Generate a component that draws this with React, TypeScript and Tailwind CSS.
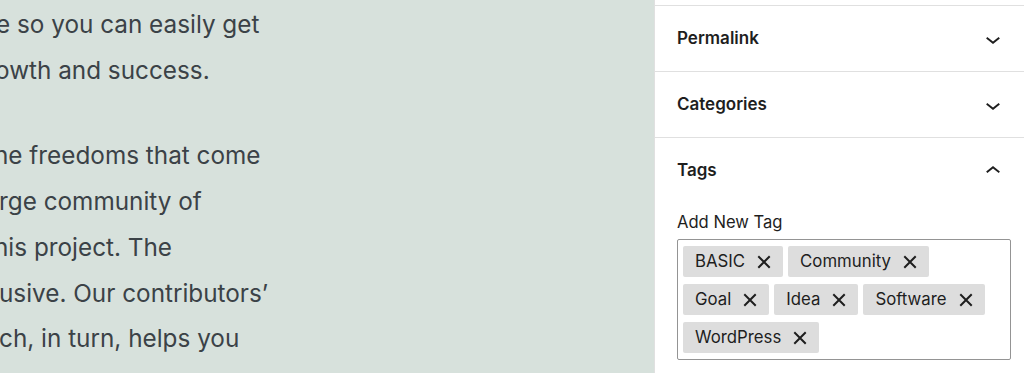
import React from 'react';

const font = { fontFamily: 'Inter, "Noto Sans", sans-serif' };

// visible fragments of the post body, with how far each line's first glyph is clipped
const paragraphs: { text: string; shift: string }[][] = [
  [
    { text: 'e so you can easily get', shift: '-ml-[4px]' },
    { text: 'owth and success.', shift: '-ml-[5px]' },
  ],
  [
    { text: 'he freedoms that come', shift: '-ml-[6px]' },
    { text: 'rge community of', shift: '-ml-[1px]' },
    { text: 'his project. The', shift: '-ml-[6px]' },
    { text: 'usive. Our contributors’', shift: '-ml-[1px]' },
    { text: 'ch, in turn, helps you', shift: '-ml-[1px]' },
  ],
];

const tags = ['BASIC', 'Community', 'Goal', 'Idea', 'Software', 'WordPress'];

function ChevronDown() {
  return (
    <svg width="30" height="30" viewBox="0 0 24 24" fill="#1e1e1e">
      <path d="M17.5 11.6L12 16l-5.5-4.4.9-1.2L12 14l4.5-3.6 1 1.2z" />
    </svg>
  );
}

function ChevronUp() {
  return (
    <svg width="30" height="30" viewBox="0 0 24 24" fill="#1e1e1e">
      <path d="M6.5 12.4L12 8l5.5 4.4-.9 1.2L12 10l-4.5 3.6-1-1.2z" />
    </svg>
  );
}

function CloseIcon() {
  return (
    <svg width="14" height="14" viewBox="0 0 14 14" stroke="#1e1e1e" strokeWidth="2" strokeLinecap="square">
      <path d="M2 2L12 12M12 2L2 12" />
    </svg>
  );
}

function PanelHeader({ title, open }: { title: string; open?: boolean }) {
  return (
    <div className="flex h-[65px] items-center justify-between pl-[22px] pr-[16px]">
      <span className="text-[17px] font-semibold text-[#1e1e1e]">{title}</span>
      {open ? <ChevronUp /> : <ChevronDown />}
    </div>
  );
}

export default function App() {
  return (
    <div className="flex h-[373px] w-[1024px] overflow-hidden" style={font}>
      {/* Post content */}
      <div className="w-[654px] shrink-0 overflow-hidden bg-[#d7e1dc] pt-[2px] text-[24.3px] leading-[45.7px] text-[#3b4247]">
        {paragraphs.map((p, i) => (
          <div key={i} className="mb-[40px]">
            {p.map((line) => (
              <div key={line.text} className={`whitespace-nowrap ${line.shift}`}>
                {line.text}
              </div>
            ))}
          </div>
        ))}
      </div>

      {/* Settings sidebar */}
      <div className="flex-1 border-l border-[#e0e0e0] bg-white pt-[5px]">
        <div className="border-t border-[#e0e0e0]">
          <PanelHeader title="Permalink" />
        </div>
        <div className="border-t border-[#e0e0e0]">
          <PanelHeader title="Categories" />
        </div>
        <div className="border-t border-[#e0e0e0]">
          <PanelHeader title="Tags" open />
          <div className="pl-[22px] pr-[13px] pt-[9px]">
            <div className="mb-[7px] text-[16.6px] leading-[20px] text-[#1e1e1e]">Add New Tag</div>
            <div className="flex flex-wrap gap-x-[5px] gap-y-[7px] rounded-[2px] border border-[#949494] px-[5px] pb-[6px] pt-[6px]">
              {tags.map((t) => (
                <span
                  key={t}
                  className="flex h-[31px] items-center gap-[12px] rounded-[2px] bg-[#dddddd] pl-[12px] pr-[12px] text-[16.8px] text-[#1e1e1e]"
                >
                  {t}
                  <CloseIcon />
                </span>
              ))}
            </div>
          </div>
        </div>
      </div>
    </div>
  );
}
